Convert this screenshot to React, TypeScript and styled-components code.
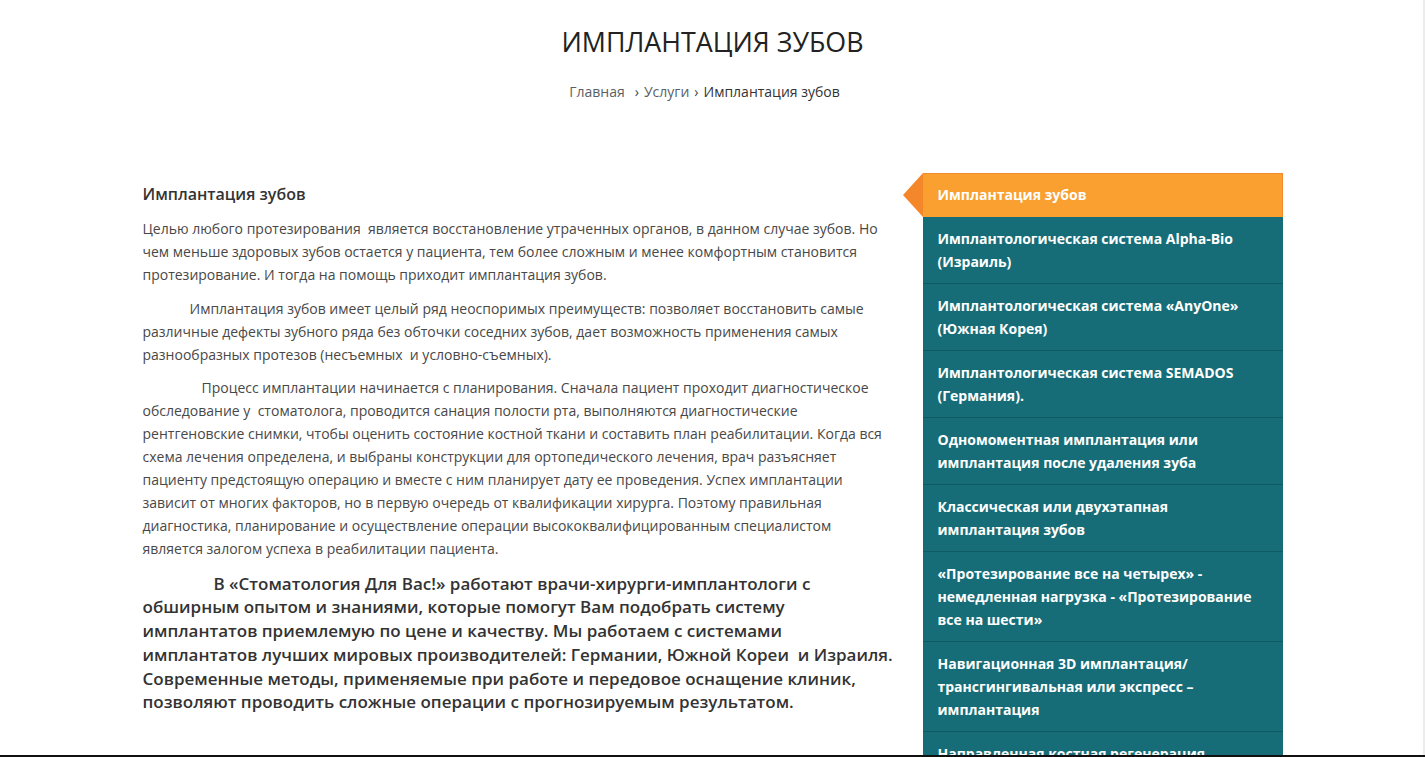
import React from 'react';
import styled, { createGlobalStyle } from 'styled-components';

const GlobalStyle = createGlobalStyle`
  html, body {
    margin: 0;
    padding: 0;
    background: #fff;
    font-family: 'Open Sans', 'Noto Sans', sans-serif;
    color: #444;
  }
`;

const PageHeader = styled.header`
  text-align: center;
  padding-top: 26px;
`;

const Title = styled.h1`
  margin: 0;
  font-size: 26.8px;
  line-height: 32px;
  font-weight: 400;
  color: #222;
  text-transform: uppercase;
`;

const Breadcrumbs = styled.nav`
  margin-top: 24px;
  padding-right: 16px;
  font-size: 14px;
  line-height: 20px;
  color: #333;
`;

const Crumb = styled.a`
  color: #5a5f66;
  text-decoration: none;
`;

const Sep = styled.span<{ $wide?: boolean }>`
  margin: ${(p) => (p.$wide ? '0 5px 0 10px' : '0 5px')};
  color: #444;
`;

const Container = styled.div`
  width: 1140px;
  margin: 71px auto 0;
  display: grid;
  grid-template-columns: 750px 360px;
  column-gap: 30px;
  align-items: start;
`;

const Article = styled.article`
  padding-top: 10px;
`;

const ArticleTitle = styled.h2`
  margin: 0 0 13px;
  font-size: 16px;
  line-height: 22px;
  font-weight: 600;
  color: #333;
`;

const Text = styled.p<{ $indent?: number }>`
  margin: 0 0 11px;
  font-size: 14px;
  line-height: 22.9px;
  color: #484848;
  text-indent: ${(p) => p.$indent || 0}px;
`;

const Lead = styled.p<{ $indent?: number }>`
  margin: 0 -20px 0 0;
  font-size: 17px;
  line-height: 23.75px;
  font-weight: 600;
  color: #333;
  text-indent: ${(p) => p.$indent || 0}px;
`;

const Menu = styled.ul`
  list-style: none;
  margin: 0;
  padding: 0;
  background: #166d78;
`;

const MenuItem = styled.li<{ $active?: boolean }>`
  position: relative;
  padding: 10px 15px;
  font-size: 14px;
  line-height: 23px;
  font-weight: 700;
  color: #fff;
  background: ${(p) => (p.$active ? '#f9a031' : '#166d78')};
  border-bottom: 1px solid ${(p) => (p.$active ? '#f9a031' : '#0f5a63')};
  ${(p) =>
    p.$active &&
    `
    border-top: 1px solid #f58a2d;
    border-right: 1px solid #f58a2d;
    padding-top: 9px;
    padding-right: 14px;
    &::before {
      content: '';
      position: absolute;
      left: -20px;
      top: -1px;
      border-style: solid;
      border-width: 22px 20px 22px 0;
      border-color: transparent #f5872b transparent transparent;
    }
  `}
`;

const BottomRule = styled.div`
  position: fixed;
  left: 0;
  right: 0;
  bottom: 0;
  height: 2px;
  background: #111;
`;

const EdgeStrip = styled.div`
  position: fixed;
  top: 0;
  right: 0;
  bottom: 0;
  width: 2px;
  background: #ececec;
`;

const menu = [
  'Имплантация зубов',
  'Имплантологическая система Alpha-Bio (Израиль)',
  'Имплантологическая система «AnyOne» (Южная Корея)',
  'Имплантологическая система SEMADOS (Германия).',
  'Одномоментная имплантация или имплантация после удаления зуба',
  'Классическая или двухэтапная имплантация зубов',
  '«Протезирование все на четырех» - немедленная нагрузка - «Протезирование все на шести»',
  'Навигационная 3D имплантация/ трансгингивальная или экспресс – имплантация',
  'Направленная костная регенерация',
  'Синус-лифтинг',
];

const App: React.FC = () => {
  return (
    <>
      <GlobalStyle />
      <PageHeader>
        <Title>Имплантация зубов</Title>
        <Breadcrumbs>
          <Crumb href="#">Главная</Crumb>
          <Sep $wide>›</Sep>
          <Crumb href="#">Услуги</Crumb>
          <Sep>›</Sep>
          <span>Имплантация зубов</span>
        </Breadcrumbs>
      </PageHeader>

      <Container>
        <Article>
          <ArticleTitle>Имплантация зубов</ArticleTitle>
          <Text>
            Целью любого протезирования&nbsp; является восстановление утраченных
            органов, в данном случае зубов. Но чем меньше здоровых зубов остается
            у пациента, тем более сложным и менее комфортным становится
            протезирование. И тогда на помощь приходит имплантация зубов.
          </Text>
          <Text $indent={47}>
            Имплантация зубов имеет целый ряд неоспоримых преимуществ: позволяет
            восстановить самые различные дефекты зубного ряда без обточки
            соседних зубов, дает возможность применения самых разнообразных
            протезов (несъемных&nbsp; и условно-съемных).
          </Text>
          <Text $indent={59}>
            Процесс имплантации начинается с планирования. Сначала пациент
            проходит диагностическое обследование у&nbsp; стоматолога, проводится
            санация полости рта, выполняются диагностические рентгеновские
            снимки, чтобы оценить состояние костной ткани и составить план
            реабилитации. Когда вся схема лечения определена, и выбраны
            конструкции для ортопедического лечения, врач разъясняет пациенту
            предстоящую операцию и вместе с ним планирует дату ее проведения.
            Успех имплантации зависит от многих факторов, но в первую очередь от
            квалификации хирурга. Поэтому правильная диагностика, планирование и
            осуществление операции высококвалифицированным специалистом является
            залогом успеха в реабилитации пациента.
          </Text>
          <Lead $indent={71}>
            В «Стоматология Для Вас!» работают врачи-хирурги-имплантологи с
            <br />
            обширным опытом и знаниями, которые помогут Вам подобрать систему
            <br />
            имплантатов приемлемую по цене и качеству. Мы работаем с системами
            <br />
            имплантатов лучших мировых производителей: Германии, Южной Кореи&nbsp;
            и Израиля.
            <br />
            Современные методы, применяемые при работе и передовое оснащение
            клиник,
            <br />
            позволяют проводить сложные операции с прогнозируемым результатом.
          </Lead>
        </Article>

        <aside>
          <Menu>
            {menu.map((item, i) => (
              <MenuItem key={item} $active={i === 0}>
                {item}
              </MenuItem>
            ))}
          </Menu>
        </aside>
      </Container>

      <EdgeStrip />
      <BottomRule />
    </>
  );
};

export default App;
